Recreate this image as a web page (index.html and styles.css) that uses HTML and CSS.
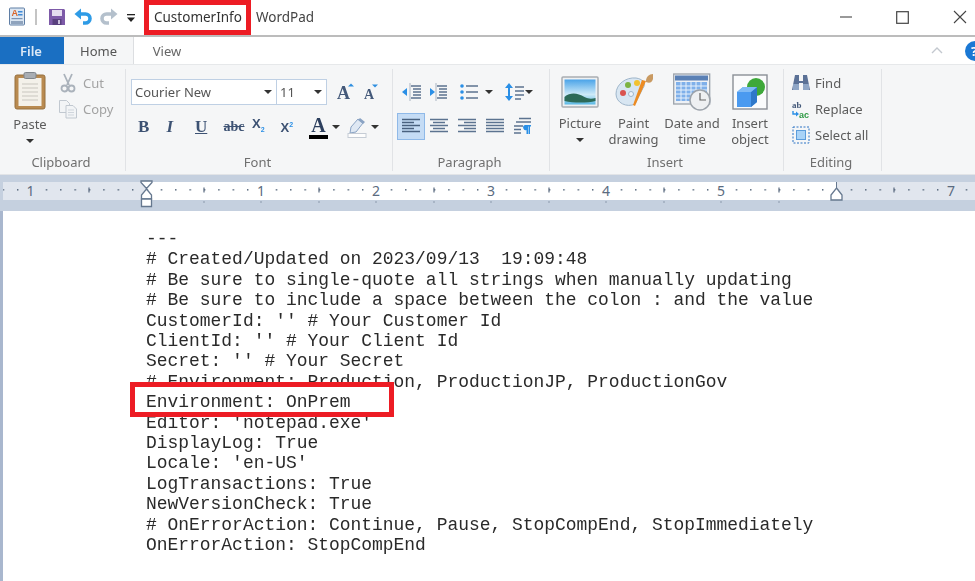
FILE: index.html
```html
<!DOCTYPE html>
<html lang="en">
<head>
<meta charset="utf-8">
<title>CustomerInfo - WordPad</title>
<link rel="stylesheet" href="styles.css">
</head>
<body>
<div class="window">
  <header class="titlebar">
    <svg class="qa qa-app" width="18" height="20" viewBox="0 0 18 20"><rect x="1.500" y="1" width="15" height="17" rx="1" fill="#dbe6f2" stroke="#5f7ea5"/><rect x="3" y="14" width="12" height="3" fill="#8fa3bd"/><text x="3.500" y="9" class="svg-a">A</text><rect x="10" y="4" width="4.500" height="1.500" fill="#3f8ad8"/><rect x="10" y="7" width="4.500" height="1.500" fill="#3f8ad8"/><rect x="3.500" y="11" width="11" height="1.200" fill="#7d93b2"/></svg>
    <span class="qa-sep"></span>
    <svg class="qa qa-save" width="18" height="18" viewBox="0 0 18 18"><path d="M1 1h15l1 1v15H1z" fill="#7d5aa8"/><rect x="4" y="2" width="10" height="6" fill="#e4dcef"/><rect x="4.500" y="11" width="9" height="6" fill="#59407e"/><rect x="10" y="12" width="2" height="4" fill="#c9bfdb"/></svg>
    <svg class="qa qa-undo" width="18" height="18" viewBox="0 0 18 18"><path d="M5 6h6.500a4 4 0 0 1 0 9H9" fill="none" stroke="#2e9be6" stroke-width="3.600"/><path d="M0.500 6 7 0.500V11.500z" fill="#2e9be6"/></svg>
    <svg class="qa qa-redo" width="18" height="18" viewBox="0 0 18 18"><path d="M13 6H6.500a4 4 0 0 0 0 9H9" fill="none" stroke="#b4c0cc" stroke-width="3.600"/><path d="M17.500 6 11 0.500V11.500z" fill="#b4c0cc"/></svg>
    <svg class="qa qa-more" width="8" height="9" viewBox="0 0 8 9"><rect y="0" width="8" height="1.300" fill="#222"/><path d="M0 3.500h8L4 8z" fill="#222"/></svg>
    <span class="doc-name">CustomerInfo</span>
    <span class="app-name">WordPad</span>
    <div class="win-buttons">
      <svg width="12" height="12" viewBox="0 0 12 12"><path d="M0 6h12" stroke="#555" stroke-width="1.200"/></svg>
      <svg width="13" height="13" viewBox="0 0 13 13"><rect x="0.700" y="0.700" width="11.600" height="11.600" fill="none" stroke="#444" stroke-width="1.200"/></svg>
      <svg width="14" height="14" viewBox="0 0 14 14"><path d="M1 1l12 12M13 1L1 13" stroke="#444" stroke-width="1.100"/></svg>
    </div>
  </header>

  <nav class="tabs">
    <span class="tab tab-file">File</span>
    <span class="tab tab-home">Home</span>
    <span class="tab tab-view">View</span>
    <svg class="collapse" width="12" height="7" viewBox="0 0 12 7"><path d="M1 6l5-5 5 5" fill="none" stroke="#c3c8cf" stroke-width="1.400"/></svg>
    <span class="help">?</span>
  </nav>

  <section class="ribbon">
    <div class="group group-clipboard">
      <div class="group-body clip-body">
        <div class="big big-paste">
          <svg width="32" height="38" viewBox="0 0 32 38"><rect x="1" y="3" width="30" height="34" rx="2" fill="#b98a50" stroke="#96703f"/><rect x="4.500" y="6" width="23" height="28" fill="#f4f1ea"/><path d="M8 12h16M8 16h16M8 20h16M8 24h16M8 28h16" stroke="#c9c6bf"/><rect x="10" y="0.500" width="12" height="6" rx="1.500" fill="#a8adb3" stroke="#7f858c"/></svg>
          <span class="big-label">Paste</span>
          <span class="caret"></span>
        </div>
        <div class="clip-side">
          <div class="small muted"><svg width="20" height="20" viewBox="0 0 20 20"><path d="M6 1l5 11M14 1L9 12" stroke="#aab2bb" stroke-width="1.800" fill="none"/><circle cx="6.500" cy="15.500" r="3" fill="none" stroke="#aab2bb" stroke-width="1.800"/><circle cx="13.500" cy="15.500" r="3" fill="none" stroke="#aab2bb" stroke-width="1.800"/></svg><span>Cut</span></div>
          <div class="small muted"><svg width="20" height="20" viewBox="0 0 20 20"><path d="M1.500 1.500h7l3 3v9h-10z" fill="#f2f4f6" stroke="#c1c8d0"/><path d="M8 6.500h7l3.500 3.500v9H8z" fill="#f2f4f6" stroke="#c1c8d0"/><path d="M10 11h6M10 13.500h6M10 16h6" stroke="#cfd5dc"/></svg><span>Copy</span></div>
        </div>
      </div>
      <div class="group-label">Clipboard</div>
    </div>

    <div class="group group-font">
      <div class="group-body font-body">
        <div class="font-row">
          <div class="combo">
            <div class="combo-cell combo-name"><span>Courier New</span><span class="caret"></span></div>
            <div class="combo-cell combo-size"><span>11</span><span class="caret"></span></div>
          </div>
          <svg class="grow" width="18" height="24" viewBox="0 0 18 24"><text x="0" y="19" class="svg-grow">A</text><path d="M11 6.500l3-3 3 3z" fill="#2f8fe0"/></svg>
          <svg class="shrink" width="14" height="24" viewBox="0 0 14 24"><text x="0" y="18.500" class="svg-shrink">A</text><path d="M8 4.500h6l-3 3z" fill="#2f8fe0"/></svg>
        </div>
        <div class="font-row fmt-row">
          <b class="fmt fmt-b">B</b>
          <i class="fmt fmt-i">I</i>
          <u class="fmt fmt-u">U</u>
          <s class="fmt fmt-s">abc</s>
          <span class="fmt fmt-sub">X<sub>2</sub></span>
          <span class="fmt fmt-sup">X<sup>2</sup></span>
          <span class="color-a">A</span><span class="caret caret-gap"></span>
          <svg class="hl" width="20" height="21" viewBox="0 0 20 21"><path d="M11 2l5 4-7 9-6 1 1-6z" fill="#dfe8f3" stroke="#8aa3c4"/><path d="M13 1l5 4-2 2-5-4z" fill="#8aa3c4"/><rect x="1" y="16.500" width="18" height="4" fill="#fdfdfd" stroke="#c5ccd5"/></svg><span class="caret caret-gap"></span>
        </div>
      </div>
      <div class="group-label">Font</div>
    </div>

    <div class="group group-para">
      <div class="group-body para-body">
        <div class="para-row">
          <svg width="20" height="20" viewBox="0 0 20 20"><path d="M9 4h10M11 7h8M11 10h8M11 13h8M9 16h10" stroke="#5c7390" stroke-width="1.300"/><path d="M8 1v18" stroke="#a9b4c2"/><path d="M0 10l5-4v8z" fill="#2a8fe6"/></svg>
          <svg width="20" height="20" viewBox="0 0 20 20"><path d="M9 4h10M11 7h8M11 10h8M11 13h8M9 16h10" stroke="#5c7390" stroke-width="1.300"/><path d="M8 1v18" stroke="#a9b4c2"/><path d="M7 10L2 6v8z" fill="#2a8fe6"/></svg>
          <span class="para-item para-list"><svg width="18" height="18" viewBox="0 0 18 18"><circle cx="2" cy="3" r="1.800" fill="#2a8fe6"/><circle cx="2" cy="9" r="1.800" fill="#2a8fe6"/><circle cx="2" cy="15" r="1.800" fill="#2a8fe6"/><path d="M6 3h12M6 9h12M6 15h12" stroke="#5c7390" stroke-width="1.500"/></svg><span class="caret"></span></span>
          <span class="para-item para-spacing"><svg width="20" height="20" viewBox="0 0 20 20"><path d="M4 1l4 5H0zM4 19l4-5H0z" fill="#2a8fe6"/><path d="M3 6h2v8H3z" fill="#2a8fe6"/><path d="M10 5h9M10 9h9M10 13h9M10 17h6" stroke="#5c7390" stroke-width="1.400"/></svg><span class="caret"></span></span>
        </div>
        <div class="para-row para-row2">
          <span class="align align-on"><svg width="18" height="16" viewBox="0 0 18 16"><path d="M0 1.500h18M0 4.500h12M0 7.500h18M0 10.500h12M0 13.500h18" stroke="#49617f" stroke-width="1.500"/></svg></span>
          <span class="align"><svg width="18" height="16" viewBox="0 0 18 16"><path d="M0 1.500h18M3 4.500h12M0 7.500h18M3 10.500h12M0 13.500h18" stroke="#5c7390" stroke-width="1.500"/></svg></span>
          <span class="align"><svg width="18" height="16" viewBox="0 0 18 16"><path d="M0 1.500h18M6 4.500h12M0 7.500h18M6 10.500h12M0 13.500h18" stroke="#5c7390" stroke-width="1.500"/></svg></span>
          <span class="align"><svg width="18" height="16" viewBox="0 0 18 16"><path d="M0 1.500h18M0 4.500h18M0 7.500h18M0 10.500h18M0 13.500h18" stroke="#5c7390" stroke-width="1.500"/></svg></span>
          <span class="align"><svg width="18" height="18" viewBox="0 0 18 18"><path d="M5 1.500h12M2 5h15M0 9h9M0 12.500h7M0 16h7" stroke="#5c7390" stroke-width="1.400"/><path d="M11 8h6v1.500h-1V17h-1.500V9.500H14V17h-1.500v-4a2.500 2.500 0 0 1-1.500-5z" fill="#2a8fe6"/></svg></span>
        </div>
      </div>
      <div class="group-label">Paragraph</div>
    </div>

    <div class="group group-insert">
      <div class="group-body insert-body">
        <div class="big big-picture">
          <svg width="38" height="32" viewBox="0 0 38 32"><rect x="1" y="1" width="36" height="30" rx="1" fill="#eef0f2" stroke="#a9adb2" stroke-width="1.500"/><defs><linearGradient id="sky" x1="0" y1="0" x2="0" y2="1"><stop offset="0" stop-color="#4aa3e8"/><stop offset=".6" stop-color="#cdeaf8"/><stop offset="1" stop-color="#58b8e4"/></linearGradient></defs><rect x="3.500" y="3.500" width="31" height="25" fill="url(#sky)"/><path d="M3.500 21c6-5 13-4 20 0 4 2 7 2 11 1v3c-8 2-22 2-31 0z" fill="#2c6a58"/></svg>
          <span class="big-label">Picture</span>
          <span class="caret"></span>
        </div>
        <div class="big big-paint">
          <svg width="38" height="38" viewBox="0 0 38 38"><path d="M1 21C1 11 11 4 21 5c8 1 10 7 7 10l-8 16c-8 4-19-1-19-10z" fill="#d8e6f2" stroke="#9fb6cb"/><circle cx="8" cy="20" r="3" fill="#d9534f"/><circle cx="13" cy="12" r="3" fill="#7cb342"/><circle cx="22" cy="10" r="3" fill="#f2c230"/><circle cx="16" cy="21" r="2.500" fill="#eef4fa" stroke="#9fb6cb"/><path d="M31 8L20 33l-2-1 9-25z" fill="#ec8b22"/><path d="M31 8c0-4 3-7 7-7v5c-1 3-3 5-7 3z" fill="#c99a62"/></svg>
          <span class="big-label">Paint<br>drawing</span>
        </div>
        <div class="big big-date">
          <svg width="38" height="38" viewBox="0 0 38 38"><rect x="0.700" y="1" width="36" height="30" fill="#eef1f5" stroke="#9ca3ab" stroke-width="1.300"/><rect x="2" y="2.500" width="33" height="5" fill="#5a80b5"/><rect x="3" y="9" width="31" height="19" fill="#7fb0ea"/><path d="M3 13h31M3 17h31M3 21h31M3 25h31M8 9v19M13 9v19M18 9v19M23 9v19M28 9v19" stroke="#e8f1fb"/><circle cx="27" cy="27" r="10" fill="#eef0f2" stroke="#9ca3ab" stroke-width="1.500"/><path d="M27 20v7h6" fill="none" stroke="#666" stroke-width="1.200"/></svg>
          <span class="big-label">Date and<br>time</span>
        </div>
        <div class="big big-obj">
          <svg width="36" height="36" viewBox="0 0 36 36"><rect x="1" y="1" width="34" height="34" fill="#fafbfc" stroke="#8a8f96" stroke-width="1.400"/><circle cx="24" cy="13" r="9" fill="#3ea83a"/><path d="M5 18l6-5h14v15l-6 5H5z" fill="#4a9af0"/><path d="M19 18l6-5v15l-6 5z" fill="#2f78c9"/><path d="M5 18l6-5h14l-6 5z" fill="#7fbaf5"/></svg>
          <span class="big-label">Insert<br>object</span>
        </div>
      </div>
      <div class="group-label">Insert</div>
    </div>

    <div class="group group-edit">
      <div class="group-body edit-body">
        <div class="small"><svg width="18" height="18" viewBox="0 0 18 18"><path d="M3 1h4v6h4V1h4l3 15h-7V9H7v7H0z" fill="#5b7196"/><rect x="1" y="10" width="6" height="6" fill="#8fa6c6"/><rect x="11" y="10" width="6" height="6" fill="#8fa6c6"/></svg><span>Find</span></div>
        <div class="small"><svg width="18" height="18" viewBox="0 0 18 18"><text x="0" y="8" class="svg-ab">ab</text><path d="M1 11v3h4" fill="none" stroke="#2a8fe6" stroke-width="1.400"/><path d="M7 14l-3-2.500v5z" fill="#2a8fe6"/><text x="7" y="17.500" class="svg-ac">ac</text></svg><span>Replace</span></div>
        <div class="small"><svg width="18" height="18" viewBox="0 0 18 18"><rect x="1" y="1" width="16" height="16" fill="none" stroke="#2a72c4" stroke-dasharray="2 1.500"/><rect x="4.500" y="4.500" width="9" height="9" fill="#a9d3f7" stroke="#5c9ddb"/></svg><span>Select all</span></div>
      </div>
      <div class="group-label">Editing</div>
    </div>
  </section>

  <div class="ruler">
    <svg width="975" height="36" viewBox="0 0 975 36">
      <defs>
        <pattern id="dots" x="2.600" y="14" width="14.375" height="4" patternUnits="userSpaceOnUse"><rect x="0" y="0" width="1.400" height="1.600" fill="#5b6b80"/></pattern>
      </defs>
      <rect width="975" height="36" fill="#c5d0df"/>
      <rect x="3" y="7" width="143" height="18" fill="#e1e6ee"/>
      <rect x="146" y="7" width="690" height="18" fill="#fff"/>
      <rect x="836" y="7" width="139" height="18" fill="#e1e6ee"/>
      <rect x="3" y="14" width="972" height="2" fill="url(#dots)"/>
      <rect x="22" y="11" width="16" height="9" fill="#e1e6ee"/>
      <rect x="253" y="11" width="16" height="9" fill="#fff"/><rect x="368" y="11" width="16" height="9" fill="#fff"/><rect x="483" y="11" width="16" height="9" fill="#fff"/><rect x="598" y="11" width="16" height="9" fill="#fff"/><rect x="713" y="11" width="16" height="9" fill="#fff"/>
      <rect x="943" y="11" width="16" height="9" fill="#e1e6ee"/>
      <path d="M89 12.500v5M204 12.500v5M319 12.500v5M434 12.500v5M549 12.500v5M664 12.500v5M779 12.500v5M894 12.500v5" stroke="#5b6b80" stroke-width="1.200"/>
      <path d="M204 26v2M261 26v2M319 26v2M376 26v2M434 26v2M491 26v2M549 26v2M606 26v2M664 26v2M721 26v2M779 26v2" stroke="#8b99ac"/>
      <g class="ruler-nums">
        <text x="30.500" y="20.500">1</text><text x="261" y="20.500">1</text><text x="376" y="20.500">2</text><text x="491" y="20.500">3</text><text x="606" y="20.500">4</text><text x="721" y="20.500">5</text><text x="951" y="20.500">7</text>
      </g>
      <path d="M141 6h11v1.500l-5.500 6-5.500-6z" fill="#fff" stroke="#66788f" stroke-width="1.300"/>
      <path d="M146.500 14l5 6v4h-10v-4z" fill="#fff" stroke="#66788f" stroke-width="1.300"/>
      <path d="M141.500 24h10v7.500h-10z" fill="#fff" stroke="#66788f" stroke-width="1.300"/>
      <path d="M836.500 13l5.500 7v5h-11v-5z" fill="#fff" stroke="#66788f" stroke-width="1.300"/>
      <path d="M836.500 7v6" stroke="#66788f"/>
    </svg>
  </div>

  <main class="doc">
<pre class="doc-text">---
# Created/Updated on 2023/09/13  19:09:48
# Be sure to single-quote all strings when manually updating
# Be sure to include a space between the colon : and the value
CustomerId: '' # Your Customer Id
ClientId: '' # Your Client Id
Secret: '' # Your Secret
# Environment: Production, ProductionJP, ProductionGov
Environment: OnPrem
Editor: 'notepad.exe'
DisplayLog: True
Locale: 'en-US'
LogTransactions: True
NewVersionCheck: True
# OnErrorAction: Continue, Pause, StopCompEnd, StopImmediately
OnErrorAction: StopCompEnd</pre>
  </main>

  <div class="mark mark-title"></div>
  <div class="mark mark-env"></div>
</div>
</body>
</html>
```

FILE: styles.css
```css
* { box-sizing: border-box; }
html, body { margin: 0; padding: 0; background: #fff; }
body { width: 975px; height: 581px; overflow: hidden; }

.window {
  position: relative;
  width: 975px;
  height: 581px;
  overflow: hidden;
  font-family: "Noto Sans", "Open Sans", sans-serif;
  font-size: 13px;
  color: #555;
  filter: blur(0.35px);
}

/* title bar */
.titlebar {
  display: flex;
  align-items: center;
  height: 37px;
  border-bottom: 2px solid #bcbcbc;
  padding: 0 8px 1px 8px;
  background: #fff;
}
.qa { flex: none; }
.qa-sep { width: 2px; height: 16px; background: #c4c4c4; margin: 0 11px 0 9px; }
.qa-undo { margin-left: 8px; }
.qa-redo { margin-left: 8px; }
.qa-more { margin: 2px 0 0 9px; }
.doc-name { margin-left: 19px; font-size: 13.500px; color: #333; }
.app-name { margin-left: 14px; font-size: 13.500px; color: #444; }
.win-buttons {
  margin-left: auto;
  display: flex;
  align-items: center;
  gap: 44px;
}
.svg-a { font: 700 9px "Liberation Sans", sans-serif; fill: #d9652b; }

/* tabs */
.tabs {
  display: flex;
  align-items: center;
  height: 27px;
  background: #fff;
  font-size: 13px;
}
.tab { display: flex; align-items: center; justify-content: center; height: 27px; }
.tab-file { width: 62px; margin-right: 2px; background: #1a6fc2; color: #dce9f6; font-weight: 600; box-shadow: 2px 0 0 #1a6fc2; }
.tab-home { width: 70px; background: #f5f6f7; border-right: 1px solid #dcdee1; color: #555; }
.tab-view { width: 66px; color: #666; }
.collapse { margin-left: auto; margin-right: 22px; }
.help {
  width: 20px;
  height: 20px;
  flex: none;
  margin-right: -10px;
  border-radius: 50%;
  background: #1a78d4;
  color: #fff;
  font-weight: 700;
  font-size: 13px;
  line-height: 20px;
  padding-left: 6px;
}

/* ribbon */
.ribbon {
  display: flex;
  height: 111px;
  padding: 4px 0 3px;
  background: #f5f6f7;
  border-top: 1px solid #e6e8ea;
  border-bottom: 1px solid #e2e4e7;
}
.group {
  display: flex;
  flex-direction: column;
  flex: none;
  border-right: 1px solid #e1e3e6;
}
.group-clipboard { width: 126px; }
.group-font { width: 267px; }
.group-para { width: 157px; }
.group-insert { width: 234px; }
.group-edit { width: 98px; }
.group-body { flex: 1; display: flex; min-height: 0; }
.group-label { height: 20px; padding: 3px 3px 0 0; text-align: center; font-size: 13px; line-height: 17px; color: #6f6f6f; }

.caret {
  display: inline-block;
  flex: none;
  width: 0;
  height: 0;
  border-left: 4px solid transparent;
  border-right: 4px solid transparent;
  border-top: 4px solid #333;
}
.caret-gap { margin-left: 4px; }

.big {
  display: flex;
  flex-direction: column;
  align-items: center;
  flex: none;
  text-align: center;
  line-height: 16px;
}
.big-label { color: #5c5c5c; }
.big svg { flex: none; }

.small { display: flex; align-items: center; gap: 5px; height: 26px; color: #5c5c5c; }
.muted { color: #a3a3a3; }

/* clipboard */
.clip-body { padding: 3px 0 0 7px; }
.big-paste { width: 46px; }
.big-paste svg { margin-bottom: 6px; }
.big-paste .caret { margin-top: 7px; }
.clip-side { margin: -2px 0 0 5px; display: flex; flex-direction: column; }

/* font */
.font-body { flex-direction: column; padding: 10px 0 0 5px; }
.font-row { display: flex; align-items: center; }
.combo {
  display: flex;
  height: 26px;
  width: 196px;
  background: #fff;
  border: 1px solid #bfd0e4;
}
.combo-cell { display: flex; align-items: center; justify-content: space-between; padding: 0 4px 0 3px; color: #555; }
.combo-name { width: 145px; border-right: 1px solid #bfd0e4; font-size: 13px; }
.combo-size { flex: 1; }
.grow { margin-left: 10px; }
.shrink { margin-left: 9px; }
.svg-grow { font: 700 18px "Liberation Serif", serif; fill: #44597a; }
.svg-shrink { font: 700 14px "Liberation Serif", serif; fill: #44597a; }
.fmt-row { margin-top: 11px; padding-left: 7px; height: 22px; }
.fmt { width: 28.500px; flex: none; font-family: "Liberation Serif", serif; font-weight: 700; color: #3d5273; font-size: 17px; line-height: 20px; }
.fmt-s { font-size: 14px; }
.fmt-sub, .fmt-sup { font-family: "Liberation Sans", sans-serif; font-size: 13px; }
.fmt sub, .fmt sup { font-size: 7px; color: #2a8fe6; }
.color-a { font: 700 20px/18px "Liberation Serif", serif; color: #2c3f5e; border-bottom: 4px solid #000; height: 23px; width: 19px; text-align: center; }
.hl { margin-left: 7px; }

/* paragraph */
.para-body { flex-direction: column; padding: 12px 0 0 9px; }
.para-row { display: flex; align-items: center; height: 22px; }
.para-row > svg { margin-right: 6px; }
.para-item { display: inline-flex; align-items: center; }
.para-list { margin-left: 6px; gap: 7px; }
.para-spacing { margin-left: 12px; gap: 0; }
.para-row2 { margin-top: 12px; margin-left: -5px; }
.align { width: 28px; height: 27px; display: flex; align-items: center; justify-content: center; flex: none; }
.align-on { background: #c5dcf5; border: 1px solid #8fb9e8; }

/* insert */
.insert-body { padding: 4px 0 0 4px; }
.insert-body .big svg { height: 38px; margin-bottom: 4px; }
.big-picture { width: 52px; }
.big-picture svg { height: 32px !important; margin: 3px 0 7px !important; }
.big-picture .caret { margin-top: 7px; }
.big-paint { width: 55px; }
.big-date { width: 62px; }
.big-obj { width: 54px; }

/* editing */
.edit-body { flex-direction: column; padding: 1px 0 0 8px; }
.svg-ab { font: 700 9px "Liberation Serif", serif; fill: #44597a; }
.svg-ac { font: 700 9px "Liberation Sans", sans-serif; fill: #2f9a46; }

/* ruler */
.ruler { height: 36px; }
.ruler svg { display: block; }
.ruler-nums text { font: 14px "Noto Sans", sans-serif; fill: #5b6b80; text-anchor: middle; }

/* document */
.doc {
  height: 371px;
  background: #fff;
  border-left: 3px solid #a9b7ce;
  padding: 18px 0 0 143px;
}
.doc-text {
  margin: 0;
  font-family: "Liberation Mono", "Courier New", monospace;
  font-size: 17.950px;
  line-height: 20.400px;
  color: #2a2a2a;
}

/* red annotations */
.mark { position: absolute; border: 5px solid #ed1c24; pointer-events: none; }
.mark-title { left: 144px; top: 0; width: 107px; height: 35px; }
.mark-env { left: 130px; top: 382px; width: 264px; height: 35px; }
```
